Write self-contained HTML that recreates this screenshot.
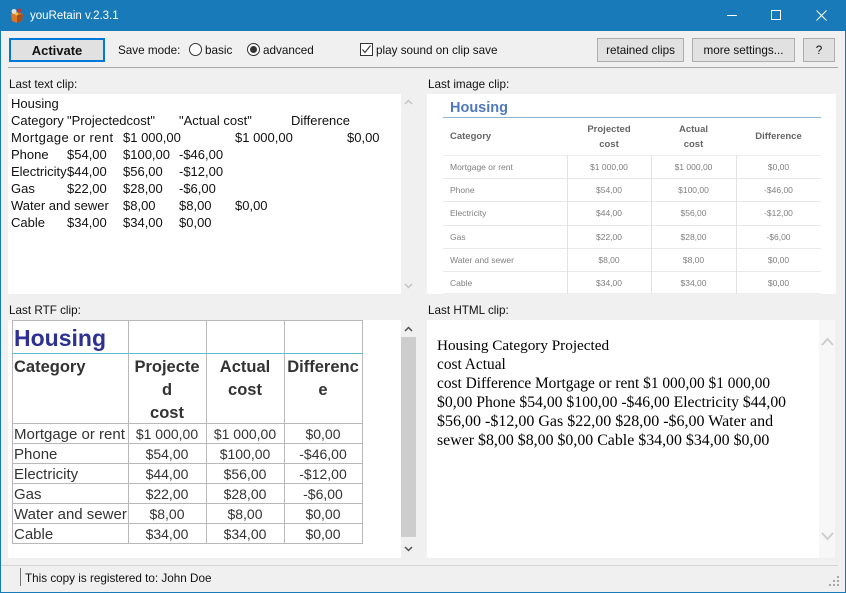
<!DOCTYPE html>
<html><head><meta charset="utf-8"><style>
html,body{margin:0;padding:0;background:#f0f0f0}
#w{position:relative;width:846px;height:593px;overflow:hidden;background:#f0f0f0;font-family:"Liberation Sans",sans-serif;font-size:11.7px;color:#111}
.a{position:absolute}
.t{position:absolute;white-space:nowrap;line-height:16px}
.c{position:absolute;white-space:nowrap;line-height:16px;text-align:center}
.btn{position:absolute;box-sizing:border-box;background:#e1e1e1;border:1px solid #adadad;text-align:center;line-height:24px;font-size:11.7px;color:#111}
#tc .t{font-size:13px;color:#111}
#rtf .t,#rtf .c{font-size:15px;color:#333;line-height:20px}
#rtf .c{font-size:14px;line-height:18px}
#rtf .b,#rtf .c.b{font-weight:bold;font-size:16.5px;line-height:20px}
#img{filter:blur(.3px)}
#img .t,#img .c{font-size:8.5px;color:#808080;line-height:12px}
#img .h{font-weight:bold;font-size:9.5px;color:#666}
#html .t{font-family:"Liberation Serif",serif;font-size:15.5px;line-height:19px;color:#000}
</style></head><body><div id="w">
<div class="a" style="left:0;top:0;width:846px;height:31px;background:#197ab9"></div>
<div class="a" style="left:0;top:0;width:1px;height:593px;background:#197ab9"></div>
<div class="a" style="right:0;top:0;width:1px;height:593px;background:#197ab9"></div>
<div class="a" style="left:0;top:592px;width:846px;height:1px;background:#197ab9"></div>
<svg class="a" style="left:9px;top:7px" width="16" height="16" viewBox="0 0 16 16"><path d="M2 7l6-2 6 2-1 7-5 2-5-2z" fill="#d9772b"/><path d="M8 8v8l5-2 1-7z" fill="#a8501c"/><circle cx="5" cy="4.500" r="2.500" fill="#e8e0d8"/><circle cx="10" cy="3.500" r="2" fill="#c8352a"/><circle cx="7.500" cy="7" r="1.500" fill="#f3c23c"/></svg>
<div class="t" style="left:30px;top:8px;color:#fff;font-size:11.5px">youRetain v.2.3.1</div>
<div class="a" style="left:727px;top:15px;width:10px;height:1px;background:#fff"></div>
<div class="a" style="left:771px;top:10px;width:8px;height:8px;border:1px solid #fff"></div>
<svg class="a" style="left:816px;top:10px" width="11" height="11" viewBox="0 0 11 11"><path d="M.5.500l10 10M10.500.500l-10 10" stroke="#fff" fill="none"/></svg>

<div class="btn" style="left:9px;top:38px;width:96px;height:24px;border:2px solid #0078d7;font-weight:bold;font-size:13px;line-height:22px">Activate</div>
<div class="t" style="left:118px;top:43px">Save mode:</div>
<div class="a" style="left:189px;top:43px;width:11px;height:11px;border:1px solid #333;border-radius:50%;background:#fff"></div>
<div class="t" style="left:205px;top:42.500px">basic</div>
<div class="a" style="left:247px;top:43px;width:11px;height:11px;border:1px solid #333;border-radius:50%;background:#fff"></div>
<div class="a" style="left:250px;top:46px;width:7px;height:7px;border-radius:50%;background:#333"></div>
<div class="t" style="left:263px;top:42.500px">advanced</div>
<div class="a" style="left:360px;top:43px;width:11px;height:11px;border:1px solid #333;background:#fff"></div>
<svg class="a" style="left:361px;top:44px" width="11" height="11" viewBox="0 0 11 11"><path d="M1.500 5.500l2.500 3 5.500-7" stroke="#333" stroke-width="1.100" fill="none"/></svg>
<div class="t" style="left:376px;top:43px">play sound on clip save</div>
<div class="btn" style="left:597px;top:38px;width:87px;height:24px">retained clips</div>
<div class="btn" style="left:692px;top:38px;width:103px;height:24px">more settings...</div>
<div class="btn" style="left:803px;top:38px;width:32px;height:24px">?</div>
<div class="a" style="left:8px;top:67px;width:830px;height:1px;background:#a8a8a8"></div>

<div class="t" style="left:9px;top:77px">Last text clip:</div>
<div class="t" style="left:428px;top:77px">Last image clip:</div>
<div class="t" style="left:9px;top:303px">Last RTF clip:</div>
<div class="t" style="left:428px;top:303px">Last HTML clip:</div>

<div id="tc" class="a" style="left:8px;top:94px;width:393px;height:200px;background:#fff">
<div class="t" style="left:3px;top:2px">Housing</div>
<div class="t" style="left:3px;top:19px">Category</div><div class="t" style="left:59px;top:19px">"Projectedcost"</div><div class="t" style="left:171px;top:19px">"Actual cost"</div><div class="t" style="left:283px;top:19px">Difference</div>
<div class="t" style="left:3px;top:36px;letter-spacing:.4px">Mortgage or rent</div><div class="t" style="left:115px;top:36px">$1 000,00</div><div class="t" style="left:227px;top:36px">$1 000,00</div><div class="t" style="left:339px;top:36px">$0,00</div>
<div class="t" style="left:3px;top:53px">Phone</div><div class="t" style="left:59px;top:53px">$54,00</div><div class="t" style="left:115px;top:53px">$100,00</div><div class="t" style="left:171px;top:53px">-$46,00</div>
<div class="t" style="left:3px;top:70px">Electricity</div><div class="t" style="left:59px;top:70px">$44,00</div><div class="t" style="left:115px;top:70px">$56,00</div><div class="t" style="left:171px;top:70px">-$12,00</div>
<div class="t" style="left:3px;top:87px">Gas</div><div class="t" style="left:59px;top:87px">$22,00</div><div class="t" style="left:115px;top:87px">$28,00</div><div class="t" style="left:171px;top:87px">-$6,00</div>
<div class="t" style="left:3px;top:104px">Water and sewer</div><div class="t" style="left:115px;top:104px">$8,00</div><div class="t" style="left:171px;top:104px">$8,00</div><div class="t" style="left:227px;top:104px">$0,00</div>
<div class="t" style="left:3px;top:121px">Cable</div><div class="t" style="left:59px;top:121px">$34,00</div><div class="t" style="left:115px;top:121px">$34,00</div><div class="t" style="left:171px;top:121px">$0,00</div>
</div>
<svg class="a" style="left:404px;top:99px" width="9" height="6" viewBox="0 0 9 6"><path d="M1 5l3.500-3.500L8 5" stroke="#c4c4c4" stroke-width="1.500" fill="none"/></svg>
<svg class="a" style="left:404px;top:283px" width="9" height="6" viewBox="0 0 9 6"><path d="M1 1l3.500 3.500L8 1" stroke="#c4c4c4" stroke-width="1.500" fill="none"/></svg>

<div id="img" class="a" style="left:427px;top:94px;width:409px;height:200px;background:#fff">
<div class="t" style="left:23px;top:6px;font-size:14.500px;line-height:16px;font-weight:bold;color:#5079bd">Housing</div>
<div class="a" style="left:16px;top:23px;width:378px;height:1px;background:#8eb7cf"></div>
<div class="a" style="left:16px;top:61px;width:378px;height:1px;background:#eee"></div>
<div class="a" style="left:16px;top:84px;width:378px;height:1px;background:#e8e8e8"></div>
<div class="a" style="left:16px;top:107px;width:378px;height:1px;background:#e8e8e8"></div>
<div class="a" style="left:16px;top:131px;width:378px;height:1px;background:#e8e8e8"></div>
<div class="a" style="left:16px;top:154px;width:378px;height:1px;background:#e8e8e8"></div>
<div class="a" style="left:16px;top:177px;width:378px;height:1px;background:#e8e8e8"></div>
<div class="a" style="left:16px;top:199px;width:378px;height:1px;background:#eee"></div>
<div class="a" style="left:140px;top:61px;width:1px;height:139px;background:#e2e2e2"></div>
<div class="a" style="left:224px;top:61px;width:1px;height:139px;background:#e2e2e2"></div>
<div class="a" style="left:309px;top:61px;width:1px;height:139px;background:#e2e2e2"></div>
<div class="t h" style="left:23px;top:37px">Category</div>
<div class="c h" style="left:140px;width:84px;top:30px">Projected</div><div class="c h" style="left:140px;width:84px;top:45px">cost</div>
<div class="c h" style="left:224px;width:85px;top:30px">Actual</div><div class="c h" style="left:224px;width:85px;top:45px">cost</div>
<div class="c h" style="left:309px;width:85px;top:37px">Difference</div>
<div class="t" style="left:23px;top:67px">Mortgage or rent</div><div class="c" style="left:140px;width:84px;top:67px">$1 000,00</div><div class="c" style="left:224px;width:85px;top:67px">$1 000,00</div><div class="c" style="left:309px;width:85px;top:67px">$0,00</div>
<div class="t" style="left:23px;top:90px">Phone</div><div class="c" style="left:140px;width:84px;top:90px">$54,00</div><div class="c" style="left:224px;width:85px;top:90px">$100,00</div><div class="c" style="left:309px;width:85px;top:90px">-$46,00</div>
<div class="t" style="left:23px;top:113px">Electricity</div><div class="c" style="left:140px;width:84px;top:113px">$44,00</div><div class="c" style="left:224px;width:85px;top:113px">$56,00</div><div class="c" style="left:309px;width:85px;top:113px">-$12,00</div>
<div class="t" style="left:23px;top:137px">Gas</div><div class="c" style="left:140px;width:84px;top:137px">$22,00</div><div class="c" style="left:224px;width:85px;top:137px">$28,00</div><div class="c" style="left:309px;width:85px;top:137px">-$6,00</div>
<div class="t" style="left:23px;top:160px">Water and sewer</div><div class="c" style="left:140px;width:84px;top:160px">$8,00</div><div class="c" style="left:224px;width:85px;top:160px">$8,00</div><div class="c" style="left:309px;width:85px;top:160px">$0,00</div>
<div class="t" style="left:23px;top:183px">Cable</div><div class="c" style="left:140px;width:84px;top:183px">$34,00</div><div class="c" style="left:224px;width:85px;top:183px">$34,00</div><div class="c" style="left:309px;width:85px;top:183px">$0,00</div>
</div>

<div id="rtf" class="a" style="left:8px;top:320px;width:393px;height:238px;background:#fff">
<div class="a" style="left:4px;top:0;width:351px;height:224px;box-sizing:border-box;border:1px solid #b8b8b8"></div>
<div class="a" style="left:120px;top:0;width:1px;height:224px;background:#b8b8b8"></div>
<div class="a" style="left:198px;top:0;width:1px;height:224px;background:#b8b8b8"></div>
<div class="a" style="left:276px;top:0;width:1px;height:224px;background:#b8b8b8"></div>
<div class="a" style="left:4px;top:33px;width:351px;height:1px;background:#5cc0cc"></div>
<div class="a" style="left:4px;top:103px;width:351px;height:1px;background:#b8b8b8"></div>
<div class="a" style="left:4px;top:123px;width:351px;height:1px;background:#b8b8b8"></div>
<div class="a" style="left:4px;top:143px;width:351px;height:1px;background:#b8b8b8"></div>
<div class="a" style="left:4px;top:163px;width:351px;height:1px;background:#b8b8b8"></div>
<div class="a" style="left:4px;top:183px;width:351px;height:1px;background:#b8b8b8"></div>
<div class="a" style="left:4px;top:203px;width:351px;height:1px;background:#b8b8b8"></div>
<div class="t b" style="left:6px;top:3px;font-size:23px;line-height:30px;color:#2e3192">Housing</div>
<div class="t b" style="left:6px;top:37px">Category</div>
<div class="c b" style="left:120px;width:78px;top:37px">Projecte</div><div class="c b" style="left:120px;width:78px;top:60px">d</div><div class="c b" style="left:120px;width:78px;top:83px">cost</div>
<div class="c b" style="left:198px;width:78px;top:37px">Actual</div><div class="c b" style="left:198px;width:78px;top:60px">cost</div>
<div class="c b" style="left:276px;width:78px;top:37px">Differenc</div><div class="c b" style="left:276px;width:78px;top:60px">e</div>
<div class="t" style="left:6px;top:105px">Mortgage or rent</div><div class="c" style="left:120px;width:78px;top:105px">$1 000,00</div><div class="c" style="left:198px;width:78px;top:105px">$1 000,00</div><div class="c" style="left:276px;width:78px;top:105px">$0,00</div>
<div class="t" style="left:6px;top:125px">Phone</div><div class="c" style="left:120px;width:78px;top:125px">$54,00</div><div class="c" style="left:198px;width:78px;top:125px">$100,00</div><div class="c" style="left:276px;width:78px;top:125px">-$46,00</div>
<div class="t" style="left:6px;top:145px">Electricity</div><div class="c" style="left:120px;width:78px;top:145px">$44,00</div><div class="c" style="left:198px;width:78px;top:145px">$56,00</div><div class="c" style="left:276px;width:78px;top:145px">-$12,00</div>
<div class="t" style="left:6px;top:165px">Gas</div><div class="c" style="left:120px;width:78px;top:165px">$22,00</div><div class="c" style="left:198px;width:78px;top:165px">$28,00</div><div class="c" style="left:276px;width:78px;top:165px">-$6,00</div>
<div class="t" style="left:6px;top:185px">Water and sewer</div><div class="c" style="left:120px;width:78px;top:185px">$8,00</div><div class="c" style="left:198px;width:78px;top:185px">$8,00</div><div class="c" style="left:276px;width:78px;top:185px">$0,00</div>
<div class="t" style="left:6px;top:205px">Cable</div><div class="c" style="left:120px;width:78px;top:205px">$34,00</div><div class="c" style="left:198px;width:78px;top:205px">$34,00</div><div class="c" style="left:276px;width:78px;top:205px">$0,00</div>
</div>
<div class="a" style="left:401px;top:337px;width:15px;height:200px;background:#cdcdcd"></div>
<svg class="a" style="left:404px;top:326px" width="9" height="6" viewBox="0 0 9 6"><path d="M1 5l3.500-3.500L8 5" stroke="#505050" stroke-width="1.500" fill="none"/></svg>
<svg class="a" style="left:404px;top:546px" width="9" height="6" viewBox="0 0 9 6"><path d="M1 1l3.500 3.500L8 1" stroke="#505050" stroke-width="1.500" fill="none"/></svg>

<div id="html" class="a" style="left:427px;top:320px;width:392px;height:238px;background:#fff">
<div class="t" style="left:10px;top:16px;font-size:15.2px">Housing Category Projected</div>
<div class="t" style="left:10px;top:35px;font-size:15.4px">cost Actual</div>
<div class="t" style="left:10px;top:54px;font-size:15.4px">cost Difference Mortgage or rent $1 000,00 $1 000,00</div>
<div class="t" style="left:10px;top:73px;font-size:15.7px">$0,00 Phone $54,00 $100,00 -$46,00 Electricity $44,00</div>
<div class="t" style="left:10px;top:92px;font-size:16px">$56,00 -$12,00 Gas $22,00 $28,00 -$6,00 Water and</div>
<div class="t" style="left:10px;top:111px;font-size:15.9px">sewer $8,00 $8,00 $0,00 Cable $34,00 $34,00 $0,00</div>
</div>
<div class="a" style="left:819px;top:320px;width:16px;height:238px;background:#f7f7f7"></div>
<svg class="a" style="left:821px;top:337px" width="13" height="9" viewBox="0 0 13 9"><path d="M1 8l5.500-6L12 8" stroke="#cdcdcd" stroke-width="2" fill="none"/></svg>
<svg class="a" style="left:821px;top:532px" width="13" height="9" viewBox="0 0 13 9"><path d="M1 1l5.500 6L12 1" stroke="#cdcdcd" stroke-width="2" fill="none"/></svg>

<div class="a" style="left:1px;top:565px;width:837px;height:1px;background:#d4d4d4"></div>
<div class="a" style="left:20px;top:568px;width:1px;height:18px;background:#777"></div>
<div class="t" style="left:25px;top:571px">This copy is registered to: John Doe</div>
<svg class="a" style="left:829px;top:576px" width="11" height="11" viewBox="0 0 11 11" fill="#a8a8a8"><rect x="8" y="0" width="2" height="2"/><rect x="4" y="4" width="2" height="2"/><rect x="8" y="4" width="2" height="2"/><rect x="0" y="8" width="2" height="2"/><rect x="4" y="8" width="2" height="2"/><rect x="8" y="8" width="2" height="2"/></svg>
</div></body></html>
